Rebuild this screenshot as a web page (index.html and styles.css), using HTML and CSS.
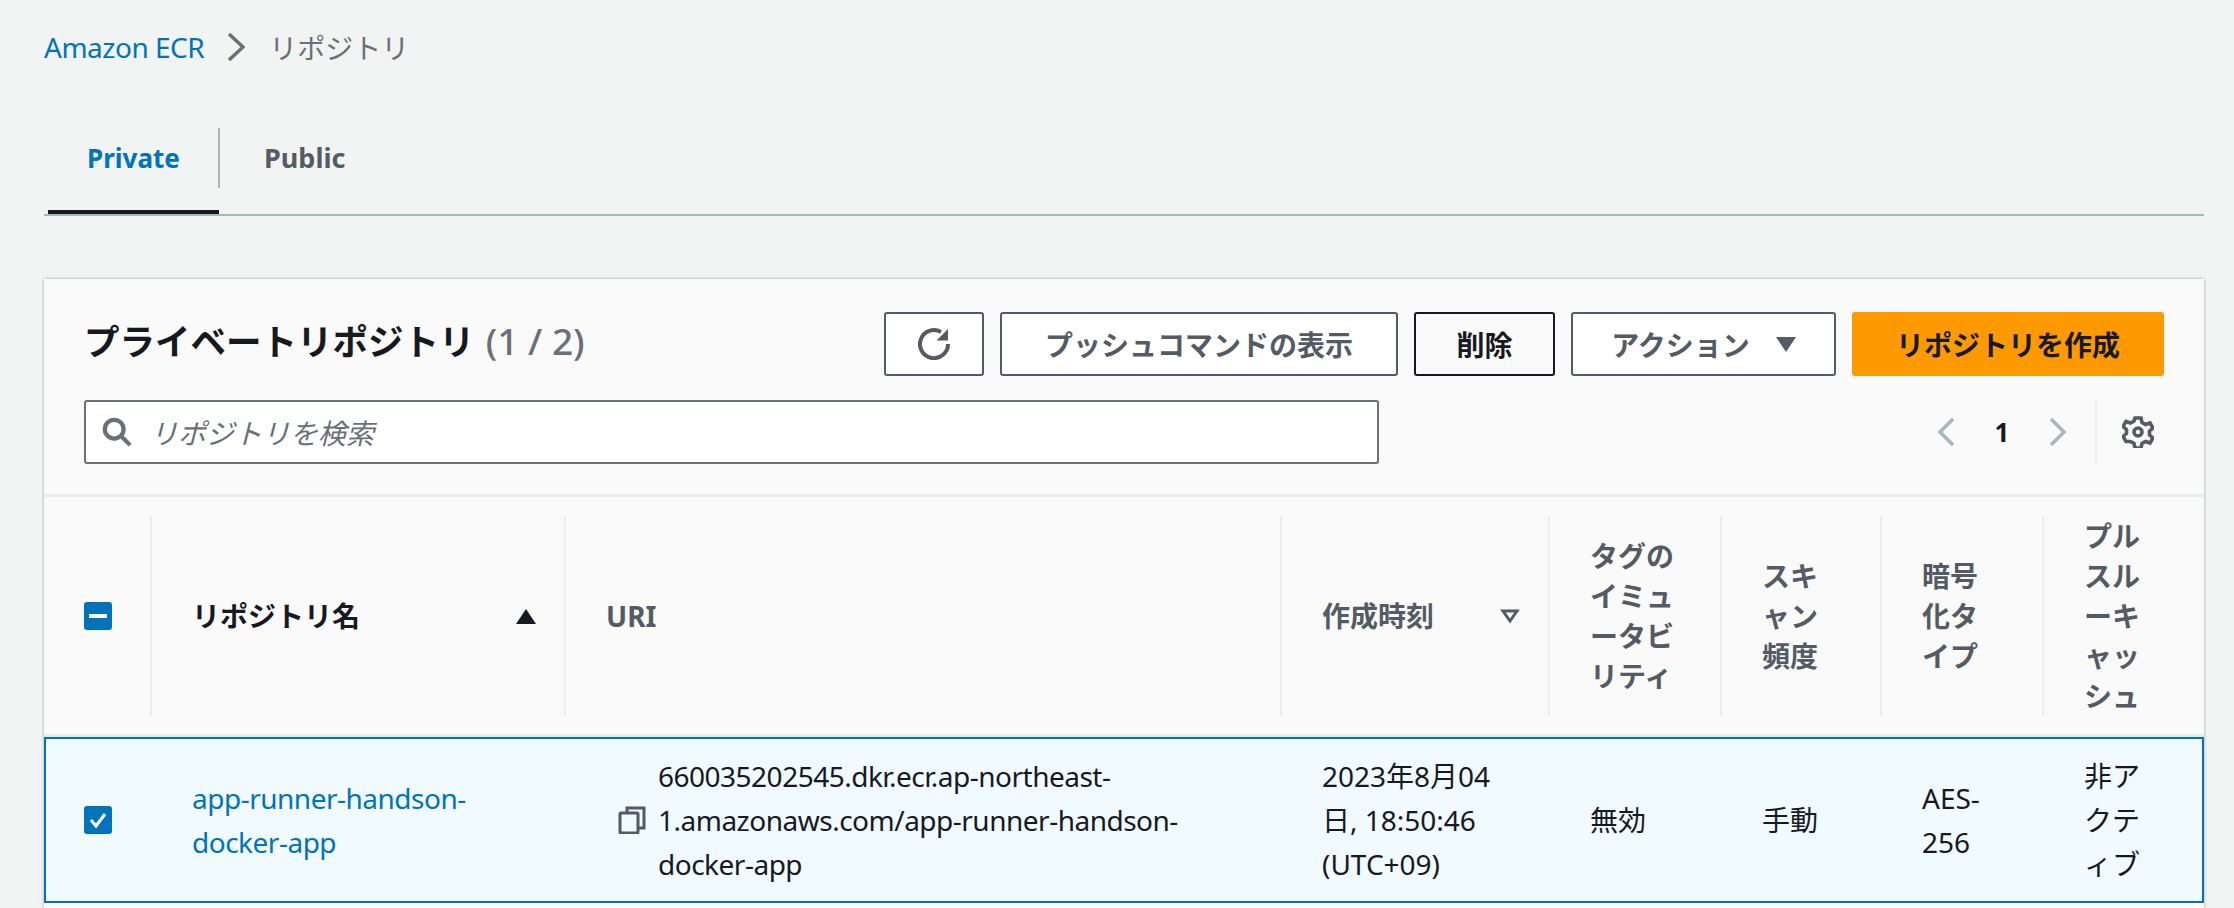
FILE: index.html
```html
<!DOCTYPE html>
<html lang="ja">
<head>
    <meta charset="UTF-8">
    <title>Amazon ECR リポジトリ</title>
    <link rel="stylesheet" href="styles.css">
</head>
<body>
    <div class="page">
        <nav class="breadcrumb">
            <a href="#">Amazon ECR</a>
            <svg class="crumb-sep" viewBox="0 0 18 30"><path d="M2 2l14 13L2 28"/></svg>
            <span>リポジトリ</span>
        </nav>

        <div class="tabs">
            <div class="tab active">Private</div>
            <div class="tab">Public</div>
        </div>

        <section class="card">
            <div class="card-head">
                <div class="title-row">
                    <h1>プライベートリポジトリ <span class="count">(1 / 2)</span></h1>
                    <div class="actions">
                        <button class="btn btn-icon">
                            <svg viewBox="0 0 32 32"><path d="M23 4A14 14 0 1 0 30 16"/><path class="head" d="M30 1v11.500H18.500z"/></svg>
                        </button>
                        <button class="btn btn-push">プッシュコマンドの表示</button>
                        <button class="btn btn-dark">削除</button>
                        <button class="btn btn-menu">アクション<span class="caret"></span></button>
                        <button class="btn btn-primary">リポジトリを作成</button>
                    </div>
                </div>
                <div class="filter-row">
                    <div class="search">
                        <svg viewBox="0 0 32 32"><circle cx="13" cy="13" r="10"/><path d="M20 20l10 10"/></svg>
                        <span>リポジトリを検索</span>
                    </div>
                    <div class="pager">
                        <svg class="pager-arrow" viewBox="0 0 18 30"><path d="M16 2L3 15l13 13"/></svg>
                        <span class="page-no">1</span>
                        <svg class="pager-arrow" viewBox="0 0 18 30"><path d="M2 2l13 13L2 28"/></svg>
                        <div class="pager-settings">
                            <svg viewBox="0 0 32 32"><circle cx="16" cy="16" r="4"/><path d="M13 2h6l1 4.500 3.500 2 4.500-1.500 3 5-3.500 3v4l3.500 3-3 5-4.500-1.500-3.500 2-1 4.500h-6l-1-4.500-3.500-2L4 25.500l-3-5 3.500-3v-4L1 10.500l3-5L8.500 7 12 5z"/></svg>
                        </div>
                    </div>
                </div>
            </div>

            <table class="repos">
                <colgroup>
                    <col class="c-check"><col class="c-name"><col class="c-uri"><col class="c-time">
                    <col class="c-tag"><col class="c-scan"><col class="c-enc"><col class="c-cache">
                </colgroup>
                <thead>
                    <tr>
                        <th><div class="th-in first"><span class="check"><i class="dash"></i></span></div></th>
                        <th><div class="th-in sort dark">リポジトリ名<span class="tri up"></span></div></th>
                        <th><div class="th-in">URI</div></th>
                        <th><div class="th-in sort">作成時刻<svg class="tri-open" viewBox="0 0 20 16"><path d="M3 3h14l-7 10z"/></svg></div></th>
                        <th><div class="th-in">タグのイミュータビリティ</div></th>
                        <th><div class="th-in">スキャン頻度</div></th>
                        <th><div class="th-in">暗号化タイプ</div></th>
                        <th><div class="th-in">プルスルーキャッシュ</div></th>
                    </tr>
                </thead>
                <tbody>
                    <tr class="selected">
                        <td class="td-check"><span class="check"><svg viewBox="0 0 28 28"><path d="M7 14l5 6 9-12"/></svg></span></td>
                        <td><a class="repo-link" href="#">app-runner-handson-docker-app</a></td>
                        <td>
                            <div class="uri">
                                <svg viewBox="0 0 28 28"><path d="M9 6V2h17v20h-6"/><rect x="2" y="7" width="18" height="20" rx="1"/></svg>
                                <span>660035202545.dkr.ecr.ap-northeast-1.amazonaws.com/app-runner-handson-docker-app</span>
                            </div>
                        </td>
                        <td>2023年8月04日, 18:50:46 (UTC+09)</td>
                        <td>無効</td>
                        <td>手動</td>
                        <td>AES-256</td>
                        <td>非アクティブ</td>
                    </tr>
                </tbody>
            </table>
        </section>
    </div>
</body>
</html>
```

FILE: styles.css
```css
* {
    box-sizing: border-box;
}
html, body {
    margin: 0;
    height: 100%;
}
body {
    font-family: "Noto Sans", "Noto Sans CJK JP", sans-serif;
    font-size: 28px;
    color: #16191f;
    background-color: #f2f3f3;
}
a {
    color: #0073bb;
    text-decoration: none;
}
.page {
    display: flex;
    flex-direction: column;
    height: 908px;
    overflow: hidden;
    padding: 0 30px 0 44px;
}

/* breadcrumb */
.breadcrumb {
    flex: none;
    display: flex;
    align-items: center;
    height: 40px;
    margin-top: 27px;
    color: #687078;
}
.breadcrumb a {
    letter-spacing: -0.5px;
}
.crumb-sep {
    width: 18px;
    height: 30px;
    margin: 0 24px 0 23px;
    fill: none;
    stroke: #687078;
    stroke-width: 3.5;
}

/* tabs */
.tabs {
    flex: none;
    display: flex;
    height: 149px;
    padding: 61px 0 0 4px;
    border-bottom: 2px solid #aab7b8;
    margin-bottom: 63px;
}
.tab {
    position: relative;
    height: 60px;
    line-height: 60px;
    padding: 0 44px;
    font-weight: 700;
    font-size: 27px;
    color: #545b64;
}
.tab.active {
    width: 172px;
    padding: 0 0 0 39px;
    font-size: 26px;
    color: #0073bb;
    border-right: 2px solid #aab7b8;
}
.tab.active::after {
    content: "";
    position: absolute;
    left: 0;
    right: -1px;
    bottom: -26px;
    height: 4px;
    background-color: #16191f;
}

/* card */
.card {
    flex: none;
    height: 700px;
    background-color: #fff;
    box-shadow: 0 0 3px rgba(0, 28, 36, 0.35);
}
.card-head {
    height: 218px;
    padding: 33px 40px 0;
    background-color: #fafafa;
    border-bottom: 3px solid #eaeded;
}
.title-row, .filter-row {
    display: flex;
    align-items: center;
    justify-content: space-between;
}
.title-row {
    height: 64px;
}
.filter-row {
    height: 64px;
    margin-top: 24px;
}
h1 {
    margin: 0;
    padding-bottom: 8px;
    font-size: 35.5px;
    font-weight: 700;
}
.count {
    margin-left: 2px;
    font-weight: 500;
    color: #687078;
    font-size: 37px;
}
.actions {
    display: flex;
    gap: 16px;
}
.btn {
    display: flex;
    align-items: center;
    justify-content: center;
    height: 64px;
    padding: 0;
    font-family: inherit;
    font-size: 28px;
    font-weight: 700;
    color: #545b64;
    background-color: #fff;
    border: 2px solid #545b64;
    border-radius: 3px;
}
.btn-icon {
    width: 100px;
}
.btn-icon svg {
    width: 32px;
    height: 32px;
    fill: none;
    stroke: #545b64;
    stroke-width: 4;
}
.btn-icon .head {
    fill: #545b64;
    stroke: none;
}
.btn-push {
    width: 398px;
}
.btn-dark {
    width: 141px;
    color: #16191f;
    background-color: #fafafa;
    border-color: #16191f;
}
.btn-menu {
    width: 265px;
}
.btn-primary {
    width: 312px;
    color: #16191f;
    background-color: #f90;
    border-color: #f90;
}
.caret {
    width: 0;
    height: 0;
    margin-left: 26px;
    border-left: 10px solid transparent;
    border-right: 10px solid transparent;
    border-top: 15px solid #545b64;
}
.search {
    display: flex;
    align-items: center;
    width: 1295px;
    height: 64px;
    padding-left: 16px;
    background-color: #fff;
    border: 2px solid #687078;
    border-radius: 3px;
    font-style: italic;
    color: #687078;
}
.search svg {
    width: 30px;
    height: 30px;
    margin-right: 18px;
    fill: none;
    stroke: #687078;
    stroke-width: 4.500;
}
.pager {
    display: flex;
    align-items: center;
    margin-right: 10px;
}
.pager-arrow {
    width: 18px;
    height: 30px;
    fill: none;
    stroke: #aab7b8;
    stroke-width: 3.5;
}
.page-no {
    width: 94px;
    text-align: center;
    font-weight: 700;
    font-size: 26px;
}
.pager-settings {
    display: flex;
    align-items: center;
    height: 64px;
    margin-left: 28px;
    padding-left: 25px;
    border-left: 2px solid #eaeded;
}
.pager-settings svg {
    width: 32px;
    height: 32px;
    fill: none;
    stroke: #545b64;
    stroke-width: 3.6;
}

/* table */
.repos {
    width: 2160px;
    table-layout: fixed;
    border-collapse: separate;
    border-spacing: 0;
}
.c-check { width: 106px; }
.c-name { width: 414px; }
.c-uri { width: 716px; }
.c-time { width: 268px; }
.c-tag { width: 172px; }
.c-scan { width: 160px; }
.c-enc { width: 162px; }
.c-cache { width: 162px; }

.repos th {
    height: 240px;
    padding: 19px 0 18px;
    background-color: #fafafa;
    text-align: left;
    font-weight: 700;
    line-height: 40px;
    color: #545b64;
    border-bottom: 3px solid #eaeded;
}
.th-in {
    display: flex;
    align-items: center;
    height: 200px;
    padding: 0 40px 0 40px;
    border-left: 2px solid #eaeded;
}
.th-in.first {
    border-left: 0;
    padding: 0 0 0 40px;
}
.th-in.sort {
    justify-content: space-between;
    padding-right: 28px;
}
.th-in.dark {
    color: #16191f;
}
.tri.up {
    width: 0;
    height: 0;
    border-left: 10px solid transparent;
    border-right: 10px solid transparent;
    border-bottom: 15px solid #16191f;
}
.tri-open {
    width: 20px;
    height: 16px;
    fill: none;
    stroke: #545b64;
    stroke-width: 3;
}
.check {
    display: flex;
    align-items: center;
    justify-content: center;
    width: 28px;
    height: 28px;
    background-color: #0073bb;
    border-radius: 3px;
}
.check .dash {
    width: 18px;
    height: 4px;
    background-color: #fff;
}
.check svg {
    width: 28px;
    height: 28px;
    fill: none;
    stroke: #fff;
    stroke-width: 3;
}
.selected td {
    height: 166px;
    padding: 15px 40px 15px 42px;
    line-height: 44px;
    background-color: #f1faff;
    border-top: 2px solid #0073bb;
    border-bottom: 2px solid #0073bb;
    overflow-wrap: anywhere;
}
.selected td:first-child {
    border-left: 2px solid #0073bb;
    padding-left: 38px;
}
.selected td:last-child {
    border-right: 2px solid #0073bb;
}
.repo-link {
    letter-spacing: -0.5px;
}
.uri {
    display: flex;
    align-items: center;
    gap: 12px;
    padding-left: 12px;
    letter-spacing: -0.5px;
    overflow-wrap: normal;
}
.uri svg {
    flex: none;
    width: 28px;
    height: 28px;
    fill: none;
    stroke: #545b64;
    stroke-width: 3;
}
.uri span {
    width: 540px;
}
```
